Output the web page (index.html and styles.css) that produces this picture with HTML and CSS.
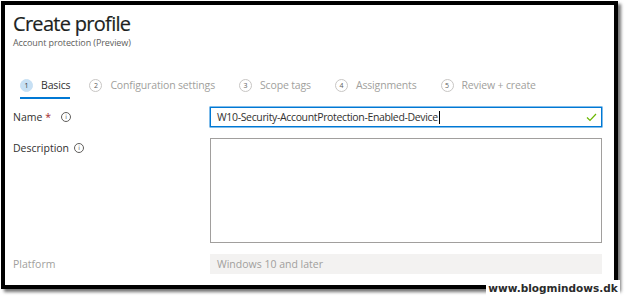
FILE: index.html
```html
<!DOCTYPE html>
<html>
<head>
<meta charset="utf-8">
<link rel="stylesheet" href="styles.css">
</head>
<body>
<div class="frame">
  <header class="head">
    <h1 class="title">Create profile</h1>
    <div class="subtitle">Account protection (Preview)</div>
  </header>
  <nav class="steps">
    <div class="step active"><span class="num">1</span><span class="label">Basics</span></div>
    <div class="step"><span class="num">2</span><span class="label">Configuration settings</span></div>
    <div class="step"><span class="num">3</span><span class="label">Scope tags</span></div>
    <div class="step"><span class="num">4</span><span class="label">Assignments</span></div>
    <div class="step"><span class="num">5</span><span class="label">Review + create</span></div>
  </nav>
  <div class="form">
    <div class="row">
      <div class="flabel">Name <span class="req">*</span> <span class="info">i</span></div>
      <div class="input focused"><span class="value">W10-Security-AccountProtection-Enabled-Device</span><span class="caret"></span>
        <svg class="check" width="11" height="9" viewBox="0 0 11 9"><path d="M1 4.5 L4 7.5 L10 1" fill="none" stroke="#6bb700" stroke-width="1.2"/></svg>
      </div>
    </div>
    <div class="row">
      <div class="flabel">Description <span class="info">i</span></div>
      <div class="textarea"></div>
    </div>
    <div class="row">
      <div class="flabel muted">Platform</div>
      <div class="input disabled">Windows 10 and later</div>
    </div>
  </div>
</div>
<div class="watermark">www.blogmindows.dk</div>
</body>
</html>
```

FILE: styles.css
```css
html, body {
  margin: 0;
  padding: 0;
  background: #fff;
}
body {
  width: 627px;
  height: 298px;
  overflow: hidden;
  position: relative;
  font-family: "Open Sans", "Noto Sans", sans-serif;
  color: #323130;
}
.frame {
  box-sizing: border-box;
  margin: 1px 0 0 1px;
  width: 617px;
  height: 288px;
  border: 4px solid #000;
  box-shadow: 3px 3px 3px rgba(0,0,0,0.55);
  padding: 6px 11px 0 8px;
  background: #fff;
}
.title {
  margin: 0;
  font-size: 20px;
  font-weight: 400;
  line-height: 26px;
  letter-spacing: -0.7px;
  color: #201f1e;
  -webkit-text-stroke: 0.2px #201f1e;
}
.subtitle {
  font-size: 9px;
  line-height: 12px;
  color: #605e5c;
  letter-spacing: -0.1px;
}
.steps {
  display: flex;
  margin-top: 24px;
  padding-left: 7px;
  height: 26px;
  align-items: flex-start;
}
.step {
  display: flex;
  align-items: center;
  height: 24px;
  border-bottom: 2px solid transparent;
  margin-right: 24px;
  font-size: 10.5px;
  color: #a19f9d;
  letter-spacing: -0.15px;
}
.step .num {
  box-sizing: border-box;
  width: 13px;
  height: 13px;
  border-radius: 50%;
  border: 1px solid #c8c6c4;
  font-size: 7px;
  display: flex;
  align-items: center;
  justify-content: center;
  margin-right: 8px;
  color: #605e5c;
}
.step.active {
  border-bottom-color: #0078d4;
  color: #323130;
  margin-right: 19px;
}
.step.active .num {
  background: #c7e0f4;
  border-color: #c7e0f4;
  color: #323130;
}
.form {
  margin-top: 8px;
  display: flex;
  flex-direction: column;
  gap: 11px;
}
.row {
  display: flex;
  align-items: flex-start;
}
.flabel {
  width: 197px;
  flex: none;
  font-size: 10.5px;
  line-height: 20px;
  display: flex;
  align-items: center;
  gap: 3px;
  color: #323130;
}
.flabel.muted { color: #a19f9d; }
.req { color: #a4262c; margin-right: 5px; }
.info {
  box-sizing: border-box;
  width: 10px;
  height: 10px;
  border: 1px solid #605e5c;
  border-radius: 50%;
  font-size: 6px;
  line-height: 8px;
  text-align: center;
  color: #605e5c;
  font-family: "DejaVu Sans", sans-serif;
  margin-left: 2px;
}
.input {
  box-sizing: border-box;
  width: 392px;
  height: 20px;
  border: 1px solid #8a8886;
  font-size: 10.5px;
  line-height: 18px;
  padding: 0 6px;
  display: flex;
  align-items: center;
  letter-spacing: -0.35px;
}
.input.focused {
  border: 1px solid #0078d4;
  box-shadow: 0 0 0 0.5px #0078d4;
}
.caret {
  width: 1px;
  height: 13px;
  background: #000;
  margin-left: 1px;
}
.check {
  margin-left: auto;
  margin-right: -2px;
}
.textarea {
  box-sizing: border-box;
  width: 392px;
  height: 105px;
  border: 1px solid #a19f9d;
}
.input.disabled {
  border-color: #f3f2f1;
  background: #f3f2f1;
  color: #a19f9d;
  letter-spacing: 0;
}
.watermark {
  position: absolute;
  left: 486px;
  top: 280px;
  width: 134px;
  height: 17px;
  background: #fff;
  font-family: "DejaVu Sans", sans-serif;
  font-weight: 700;
  font-size: 10.5px;
  line-height: 17px;
  color: #2b2b2b;
  letter-spacing: 0;
  text-align: center;
  white-space: nowrap;
}
```
